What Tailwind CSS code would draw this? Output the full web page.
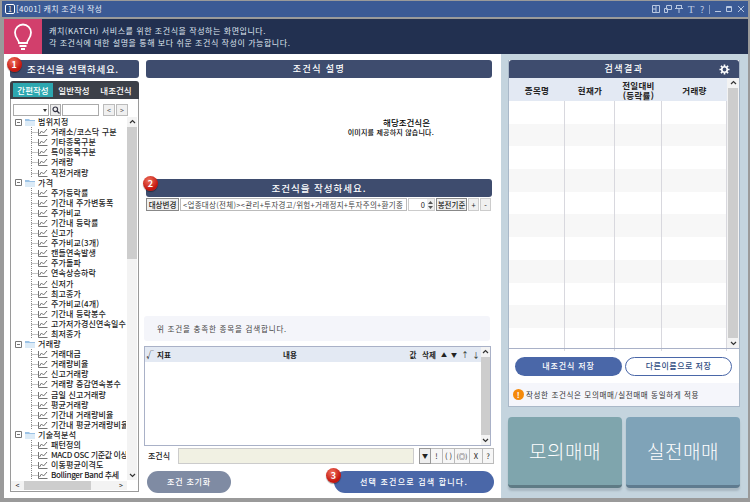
<!DOCTYPE html>
<html lang="ko">

<head>
    <meta charset="UTF-8">
    <title>[4001] 캐치 조건식 작성</title>
    <script src="https://cdn.jsdelivr.net/npm/@tailwindcss/browser@4"></script>
</head>

<body class="h-[502px] w-[750px] overflow-hidden bg-[#9a9a9a] font-['Noto_Sans_CJK_KR','Noto_Sans',sans-serif] text-[8px] text-[#222]">
    <div class="ml-[2px] mt-[1px] flex h-[497px] w-[746px] flex-col">
        <!-- Title bar -->
        <div class="flex h-[16px] shrink-0 items-center bg-[#3b5a95] pl-[3px] pr-[3px] text-[#e8eef8]">
            <span class="flex h-[10px] w-[10px] items-center justify-center rounded-[2px] border border-white bg-[#2d4a80] text-[7px] leading-none">1</span>
            <span class="ml-[1px] text-[8px] tracking-[0.3px]">[4001] 캐치 조건식 작성</span>
            <div class="ml-auto flex items-center gap-[3.600px] text-[#b9c8e2]">
                <svg class="h-[8px] w-[8px]" viewBox="0 0 8 8" fill="none" stroke="currentColor"><path d="M.5.5h7v7h-7zM.5 4h3.500v3.500M4 .5V4"/></svg>
                <svg class="h-[8px] w-[8px]" viewBox="0 0 8 8" fill="none" stroke="currentColor"><path d="M2.500.5h5v4h-5zM.5 3.500h3v4h-3z"/></svg>
                <svg class="h-[8px] w-[8px]" viewBox="0 0 8 8" fill="none" stroke="currentColor"><path d="M1 .5h6M0 3.500h8M1.500 1v2.500M6.500 1v2.500M4 3.500V8"/></svg>
                <span class="w-[8px] text-center font-['Liberation_Serif',serif] text-[11px] leading-none">T</span>
                <span class="w-[7px] text-center text-[9px] leading-none">?</span>
                <span class="h-[9px] w-px bg-[#b9c8e2]/60"></span>
                <svg class="h-[8px] w-[8px]" viewBox="0 0 8 8" fill="none" stroke="currentColor"><path d="M1 6.500h6"/></svg>
                <svg class="h-[8px] w-[8px]" viewBox="0 0 8 8" fill="none" stroke="currentColor"><path d="M1.500 1.500h5v5h-5zM1.500 2.500h5"/></svg>
                <svg class="h-[8px] w-[8px]" viewBox="0 0 8 8" fill="none" stroke="currentColor"><path d="M1 1l6 6M7 1L1 7"/></svg>
            </div>
        </div>

        <!-- Window body -->
        <div class="mt-[2px] flex min-h-0 flex-1 flex-col border-l-2 border-[#9a9a9a] bg-white">
            <!-- Banner -->
            <div class="flex h-[35px] shrink-0 bg-[#223050] text-[#dfe5ef]">
                <div class="flex w-[38px] items-center justify-center bg-[#d23f6c]">
                    <svg class="h-[28px] w-[20px]" viewBox="0 0 20 28" fill="none" stroke="white" stroke-width="1.800">
                        <path d="M6 20c0-3-4-5-4-10.500a8 8 0 0 1 16 0C18 15 14 17 14 20z" />
                        <path d="M6.500 23h7M8 26h4" />
                    </svg>
                </div>
                <div class="ml-[7px] flex flex-col justify-center text-[8px] leading-[11.500px] tracking-[0.55px]">
                    <p>캐치(KATCH) 서비스를 위한 조건식을 작성하는 화면입니다.</p>
                    <p>각 조건식에 대한 설명을 통해 보다 쉬운 조건식 작성이 가능합니다.</p>
                </div>
            </div>

            <div class="flex min-h-0 flex-1">
                <!-- Left: condition list -->
                <div class="flex w-[142px] shrink-0 flex-col pb-[6px] pl-[6px] pr-[7px] pt-[6px]">
                    <div class="relative flex h-[18px] shrink-0 items-center rounded-[3px] bg-[#3e4c6e] pl-[17px] text-[9.500px] font-medium tracking-[0.7px] text-white">
                        조건식을 선택하세요.
                        <span class="absolute -left-[3px] -top-[3px] flex h-[15px] w-[15px] items-center justify-center rounded-full bg-[radial-gradient(circle_at_40%_30%,#f0705c,#c4170f_65%)] text-[9px] font-bold leading-none text-white shadow-[0_1px_1px_#0006]">1</span>
                    </div>
                    <div class="mt-[3px] flex h-[18px] shrink-0 items-start rounded-t-[3px] bg-[#3c4048] pl-[3px] pt-[2px] text-[8.500px] font-medium text-white">
                        <span class="flex h-[14px] w-[40px] items-center justify-center bg-[#2da7b0]">간편작성</span>
                        <span class="flex h-[14px] w-[42px] items-center justify-center">일반작성</span>
                        <span class="flex h-[14px] w-[42px] items-center justify-center">내조건식</span>
                    </div>
                    <div class="flex min-h-0 flex-1 flex-col border border-t-0 border-[#9a9a9a] bg-white">
                        <!-- Search tools -->
                        <div class="flex h-[18px] shrink-0 items-center gap-[1px] px-[2px] pt-[4px] text-[#555]">
                            <div class="flex h-[12px] w-[36px] items-center justify-end border border-[#aaa] pr-[1px]"><span class="border-x-[2.500px] border-t-[3px] border-x-transparent border-t-[#333]"></span></div>
                            <div class="flex h-[12px] w-[11px] items-center justify-center border border-[#aaa] bg-[#eee]">
                                <svg class="h-[8px] w-[8px]" viewBox="0 0 8 8" fill="none" stroke="#334" stroke-width="1.200"><circle cx="3.300" cy="3.300" r="2.300"/><path d="M5 5l2.500 2.500"/></svg>
                            </div>
                            <div class="h-[12px] w-[37px] border border-[#aaa]"></div>
                            <div class="ml-[3px] flex h-[12px] w-[12px] items-center justify-center border border-[#bbb] bg-[#f0f0f0] text-[7px] leading-none">&lt;</div>
                            <div class="flex h-[12px] w-[12px] items-center justify-center border border-[#bbb] bg-[#f0f0f0] text-[7px] leading-none">&gt;</div>
                        </div>
                        <!-- Tree -->
                        <div class="relative min-h-0 flex-1 overflow-hidden">
                            <div id="tree" class="h-[363px] w-[115px] overflow-hidden"></div>
                            <!-- Vertical scrollbar -->
                            <div class="absolute right-[1px] top-0 flex h-[363px] w-[10px] flex-col items-center bg-[#f3f3f3]">
                                <svg class="h-[10px] w-[7px] shrink-0" viewBox="0 0 7 10" fill="none" stroke="#333" stroke-width="1.200"><path d="M1 6l2.500-2.500L6 6"/></svg>
                                <div class="h-[132px] w-full bg-[#cdcdcd]"></div>
                                <svg class="mt-auto h-[10px] w-[7px] shrink-0" viewBox="0 0 7 10" fill="none" stroke="#333" stroke-width="1.200"><path d="M1 4l2.500 2.500L6 4"/></svg>
                            </div>
                            <!-- Horizontal scrollbar -->
                            <div class="absolute bottom-[1px] left-0 flex h-[9px] w-[116px] items-center bg-[#f3f3f3] text-[7px] leading-none">
                                <span class="w-[13px] text-center">&lt;</span>
                                <div class="h-full w-[67px] bg-[#cdcdcd]"></div>
                                <span class="ml-auto w-[12px] text-center">&gt;</span>
                            </div>
                        </div>
                    </div>
                </div>

                <!-- Middle: description and builder -->
                <div class="flex w-[355px] shrink-0 flex-col pr-[9px] pt-[6px]">
                    <div class="flex h-[18px] shrink-0 items-center justify-center rounded-[3px] bg-[#3e4c6e] text-[9px] font-medium tracking-[1.400px] text-white">조건식 설명</div>
                    <div class="flex h-[101px] shrink-0 flex-col items-end pr-[58px] pt-[40px] font-medium leading-[9.500px]">
                        <p class="mr-[4px] text-[8.500px] text-black">해당조건식은</p>
                        <p class="text-[7px] tracking-[0.2px] text-black">이미지를 제공하지 않습니다.</p>
                    </div>
                    <div class="relative flex h-[18px] shrink-0 items-center justify-center rounded-[3px] bg-[#3e4c6e] text-[9.500px] font-medium tracking-[1px] text-white">
                        조건식을 작성하세요.
                        <span class="absolute -left-[3px] -top-[3px] flex h-[15px] w-[15px] items-center justify-center rounded-full bg-[radial-gradient(circle_at_40%_30%,#f0705c,#c4170f_65%)] text-[9px] font-bold leading-none tracking-normal text-white shadow-[0_1px_1px_#0006]">2</span>
                    </div>
                    <!-- Condition bar -->
                    <div class="mt-[1px] flex h-[13px] shrink-0 items-stretch gap-[1px] text-[7.500px] leading-[11px]">
                        <span class="w-[33px] border border-[#888] bg-[#efefef] text-center font-medium">대상변경</span>
                        <span class="w-[227px] overflow-hidden whitespace-nowrap border border-[#bbb] pl-[2px] tracking-[0.3px] text-[#444]">&lt;업종대상(전체)&gt;&lt;관리+투자경고/위험+거래정지+투자주의+환기종</span>
                        <span class="flex w-[27px] items-center justify-end border border-[#ccc]">0<span class="ml-[2px] flex h-full w-[7px] flex-col items-center justify-center bg-[#eee] text-[#555]"><svg class="h-[5px] w-[5px]" viewBox="0 0 5 5"><path fill="currentColor" d="M2.500 1L5 4H0z"/></svg><svg class="h-[5px] w-[5px]" viewBox="0 0 5 5"><path fill="currentColor" d="M2.500 4L5 1H0z"/></svg></span></span>
                        <span class="w-[31px] border border-[#888] bg-[#efefef] text-center font-medium">봉전기준</span>
                        <span class="w-[11px] border border-[#ccc] bg-[#f0f0f0] text-center">+</span>
                        <span class="w-[11px] border border-[#ccc] bg-[#f0f0f0] text-center">-</span>
                    </div>
                    <div class="mt-[105px] flex h-[25px] w-[346px] shrink-0 -translate-x-[2px] items-center rounded-[3px] bg-[#f4f5fa] pl-[13px] text-[7.500px] tracking-[0.8px] text-[#444]">위 조건을 충족한 종목을 검색합니다.</div>
                    <!-- Condition table -->
                    <div class="mt-[5px] flex h-[100px] w-[347px] shrink-0 -translate-x-[2px] border border-[#a9b1c7]">
                        <div class="flex h-[15px] flex-1 items-center bg-[#e3e9f3] text-[7.500px] font-bold leading-none">
                            <span class="w-[10px] text-center">√</span>
                            <span class="w-[18px] text-center">지표</span>
                            <span class="w-[234px] text-center">내용</span>
                            <span class="w-[12px] text-center">값</span>
                            <span class="w-[20px] text-center">삭제</span>
                            <span class="w-[10px] text-center text-[6px]">▲</span>
                            <span class="w-[10px] text-center text-[6px]">▼</span>
                            <span class="w-[12px] text-center font-normal">↑</span>
                            <span class="w-[10px] text-center font-normal">↓</span>
                        </div>
                        <div class="flex w-[10px] flex-col items-center bg-[#f3f3f3]">
                            <svg class="h-[10px] w-[7px] shrink-0" viewBox="0 0 7 10" fill="none" stroke="#333" stroke-width="1.200"><path d="M1 6l2.500-2.500L6 6"/></svg>
                            <div class="w-full flex-1 bg-[#cdcdcd]"></div>
                            <svg class="h-[10px] w-[7px] shrink-0" viewBox="0 0 7 10" fill="none" stroke="#333" stroke-width="1.200"><path d="M1 4l2.500 2.500L6 4"/></svg>
                        </div>
                    </div>
                    <!-- Condition formula -->
                    <div class="mt-[2px] flex h-[16px] w-[350px] shrink-0 -translate-x-[2px] items-center">
                        <span class="w-[34px] pl-[4px] text-[8px] font-medium">조건식</span>
                        <div class="h-full w-[236px] border border-[#ccc] bg-[#f1f1e3]"></div>
                        <div class="ml-[5px] flex h-full text-[7.500px] leading-none">
                            <span class="flex w-[12px] items-center justify-center border border-[#999] bg-[#eee] text-[6px]">▼</span>
                            <span class="flex w-[12px] items-center justify-center border-y border-r border-[#bbb] bg-[#f6f6f6]">!</span>
                            <span class="flex w-[12px] items-center justify-center border-y border-r border-[#bbb] bg-[#f6f6f6]">( )</span>
                            <span class="flex w-[15px] items-center justify-center border-y border-r border-[#bbb] bg-[#f6f6f6] text-[6.500px]">(◎)</span>
                            <span class="flex w-[13px] items-center justify-center border-y border-r border-[#bbb] bg-[#f6f6f6]">X</span>
                            <span class="flex w-[11px] items-center justify-center border-y border-r border-[#bbb] bg-[#f6f6f6]">?</span>
                        </div>
                    </div>
                    <!-- Actions -->
                    <div class="mt-[7px] flex h-[22px] w-[350px] shrink-0 -translate-x-[2px] items-center justify-between pl-[3px]">
                        <button class="h-full w-[84px] rounded-full bg-[#7f8ba3] text-[8px] font-medium tracking-[0.8px] text-white">조건 초기화</button>
                        <button class="relative h-full w-[160px] rounded-full bg-[#4a67a8] text-[8px] font-medium tracking-[1.200px] text-white">
                            선택 조건으로 검색 합니다.
                            <span class="absolute -left-[8px] -top-[3px] flex h-[15px] w-[15px] items-center justify-center rounded-full bg-[radial-gradient(circle_at_40%_30%,#f0705c,#c4170f_65%)] text-[9px] font-bold leading-none tracking-normal text-white shadow-[0_1px_1px_#0006]">3</span>
                        </button>
                    </div>
                </div>

                <!-- Right: search results -->
                <div class="flex flex-1 flex-col bg-[#c4d4de] pl-[7px] pr-[8px] pt-[6px]">
                    <div class="flex h-[347px] shrink-0 flex-col border-x border-b border-[#a9b8c8] bg-white">
                        <div class="relative flex h-[18px] shrink-0 items-center justify-center rounded-t-[3px] bg-[#3e4c6e] text-[9px] font-medium tracking-[1.500px] text-white">
                            검색결과
                            <svg class="absolute right-[9px] h-[11px] w-[11px]" viewBox="0 0 12 12" fill="none" stroke="white"><circle cx="6" cy="6" r="3" stroke-width="1.800"/><path stroke-width="1.800" d="M6 .5v2M6 9.500v2M.5 6h2M9.500 6h2M2.100 2.100l1.400 1.400M8.500 8.500l1.400 1.400M9.900 2.100L8.500 3.500M3.500 8.500l-1.400 1.400"/></svg>
                        </div>
                        <div class="flex h-[270px] shrink-0">
                            <div class="flex flex-1 flex-col">
                                <div class="grid h-[23px] shrink-0 grid-cols-[56px_50px_47px_1fr] items-center bg-[#e3e9f3] text-center text-[8.500px] font-bold leading-[10px] tracking-[0.3px]">
                                    <span>종목명</span>
                                    <span>현재가</span>
                                    <span>전일대비<br>(등락률)</span>
                                    <span>거래량</span>
                                </div>
                                <div id="resultRows" class="flex-1"></div>
                            </div>
                            <div class="flex w-[12px] flex-col items-center bg-[#f3f3f3]">
                                <svg class="h-[10px] w-[7px] shrink-0" viewBox="0 0 7 10" fill="none" stroke="#333" stroke-width="1.200"><path d="M1 6l2.500-2.500L6 6"/></svg>
                                <div class="w-[10px] flex-1 bg-[#cdcdcd]"></div>
                                <svg class="h-[10px] w-[7px] shrink-0" viewBox="0 0 7 10" fill="none" stroke="#333" stroke-width="1.200"><path d="M1 4l2.500 2.500L6 4"/></svg>
                            </div>
                        </div>
                        <div class="border-t border-[#a9b1c7]"></div>
                        <div class="flex h-[34px] shrink-0 items-center gap-[3px] pl-[6px]">
                            <button class="h-[19px] w-[107px] rounded-full bg-[#4a67a8] text-[8px] font-medium tracking-[0.9px] text-white">내조건식 저장</button>
                            <button class="h-[19px] w-[107px] rounded-full border border-[#4a67a8] bg-white text-[8px] font-medium tracking-[0.5px] text-[#2d4a80]">다른이름으로 저장</button>
                        </div>
                        <div class="flex flex-1 items-center bg-[#f5f6fb] pl-[4px] text-[7.500px] tracking-[0.65px] text-[#333]">
                            <span class="mr-[2px] flex h-[11px] w-[11px] items-center justify-center rounded-full bg-[#f58a0b] text-[8px] font-bold leading-none text-white">!</span>
                            작성한 조건식은 모의매매/실전매매 동일하게 적용
                        </div>
                    </div>
                    <div class="mt-[10px] flex h-[71px] gap-[4px] text-[19px] font-light tracking-[0.5px] text-white">
                        <button class="flex-1 rounded-[4px] border-b-[3px] border-[#5f7b85] bg-[#7fa5ad] shadow-[0_3px_2px_#a8b8c2]">모의매매</button>
                        <button class="flex-1 rounded-[4px] border-b-[3px] border-[#5f7b8f] bg-[#7fa3b8] shadow-[0_3px_2px_#a8b8c2]">실전매매</button>
                    </div>
                </div>
            </div>
        </div>
    </div>

    <script>
        const treeData = [
            { name: '범위지정', items: ['거래소/코스닥 구분', '기타종목구분', '특이종목구분', '거래량', '직전거래량'] },
            { name: '가격', items: ['주가등락률', '기간내 주가변동폭', '주가비교', '기간내 등락률', '신고가', '주가비교(3개)', '캔들연속발생', '주가돌파', '연속상승하락', '신저가', '최고종가', '주가비교(4개)', '기간내 등락봉수', '고가저가경신연속일수', '최저종가'] },
            { name: '거래량', items: ['거래대금', '거래량비율', '신고거래량', '거래량 증감연속봉수', '금일 신고거래량', '평균거래량', '기간내 거래량비율', '기간내 평균거래량비율'] },
            { name: '기술적분석', items: ['패턴정의', 'MACD OSC 기준값 이상', '이동평균이격도', 'Bollinger Band 추세'] }
        ]

        // render tree
        function renderTree() {
            let result = ''
            treeData.forEach(group => {
                result += `<div class="flex h-[10.100px] items-center whitespace-nowrap pl-[4px] font-medium leading-none tracking-[0.3px]">
                    <svg class="h-[7px] w-[7px] shrink-0" viewBox="0 0 7 7" fill="none" stroke="#777"><path d="M.5.5h6v6h-6zM2 3.500h3"/></svg>
                    <svg class="ml-[3px] h-[8px] w-[10px] shrink-0" viewBox="0 0 10 8"><path fill="#9cc3e6" d="M0 1h4l1 1h5v6H0z"/><path fill="#dcebf7" d="M0 3h10v5H0z"/></svg>
                    <span class="ml-[3px]">${group.name}</span>
                </div>`
                group.items.forEach(item => {
                    // latin names run narrower in the reference
                    const spacing = /[A-Za-z]/.test(item) ? 'tracking-[-0.35px]' : 'tracking-[0.15px]'
                    result += `<div class="flex h-[10.100px] items-center whitespace-nowrap pl-[20px] font-medium leading-none ${spacing}">
                        <svg class="h-[10px] w-[7px] shrink-0" viewBox="0 0 7 10" fill="none" stroke="#888" stroke-dasharray="1 1"><path d="M.5 0v10M.5 5.500H7"/></svg>
                        <svg class="h-[8px] w-[10px] shrink-0" viewBox="0 0 10 8" fill="none" stroke="#666" stroke-width=".9"><path d="M.5 1v6.500h9M1.500 6l2-3 2 2 3.500-4"/></svg>
                        <span class="ml-[3px]">${item}</span>
                    </div>`
                })
            })
            document.getElementById('tree').innerHTML = result
        }

        // render empty result rows
        function renderRows() {
            let result = ''
            for (let i = 0; i < 11; i++) {
                result += `<div class="grid h-[22.700px] grid-cols-[56px_50px_47px_1fr] ${i % 2 ? 'bg-[#f7f7f7]' : 'bg-white'}">
                    <span class="border-r border-[#d8d8de]"></span>
                    <span class="border-r border-[#d8d8de]"></span>
                    <span class="border-r border-[#d8d8de]"></span>
                    <span class="border-r border-[#d8d8de]"></span>
                </div>`
            }
            document.getElementById('resultRows').innerHTML = result
        }

        renderTree()
        renderRows()
    </script>
</body>

</html>
